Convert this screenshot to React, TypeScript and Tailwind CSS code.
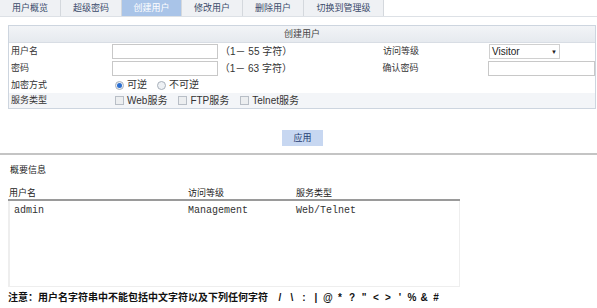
import React from "react";

const tabs = [
  { label: "用户概览", w: "w-[61px]" },
  { label: "超级密码", w: "w-[61px]" },
  { label: "创建用户", w: "w-[60px]", active: true },
  { label: "修改用户", w: "w-[61px]" },
  { label: "删除用户", w: "w-[61px]" },
  { label: "切换到管理级", w: "w-[80px]" },
];

const users = [{ name: "admin", level: "Management", service: "Web/Telnet" }];

const badChars = ["/", "\\", ":", "|", "@", "*", "?", '"', "<", ">", "'", "%", "&", "#"];

function TextBox({ w = "w-[106px]" }: { w?: string }) {
  return <div className={`${w} h-[15px] bg-white border border-[#c8c8c8]`} />;
}

function Radio({ checked }: { checked?: boolean }) {
  return (
    <span className="w-[9px] h-[9px] rounded-full border border-[#a8b0ba] bg-[#eef1f4] flex items-center justify-center">
      {checked && <span className="w-[5px] h-[5px] rounded-full bg-[#2c6fd1]" />}
    </span>
  );
}

function Check() {
  return <span className="w-[9px] h-[9px] border border-[#b8bec6] bg-[#eceef0]" />;
}

export default function App() {
  return (
    <div className="w-[597px] h-[308px] bg-white text-[#333] text-[9px] leading-none font-['Liberation_Sans','Noto_Sans_CJK_SC',sans-serif] overflow-hidden">
      {/* Tabs */}
      <div className="flex h-[17px] border-b border-[#dde1e6]">
        {tabs.map((t) => (
          <div
            key={t.label}
            className={`${t.w} flex items-center justify-center border-r border-[#d4d8dd] ${
              t.active ? "bg-[#a9c4e8] text-white" : "bg-[#eff1f4] text-[#3a4a6a]"
            }`}
          >
            {t.label}
          </div>
        ))}
        <div className="flex-1" />
      </div>

      {/* Create user panel */}
      <div className="mt-[8px] ml-[8px] w-[588px] border border-[#cdd5df]">
        <div className="h-[17px] bg-gradient-to-b from-[#f2f4f7] to-[#e6eaef] border-b border-[#d8dde4] flex items-center justify-center text-[#444]">
          创建用户
        </div>

        <div className="h-[17px] flex items-center">
          <div className="w-[103px] pl-[2px]">用户名</div>
          <TextBox />
          <div className="w-[165px] pl-[2px] text-[10px]">（1－ 55 字符）</div>
          <div className="w-[106px]">访问等级</div>
          <div className="w-[71px] h-[15px] bg-white border border-[#d0d0d0] flex items-center justify-between px-[2px] text-[10px] text-[#222]">
            <span>Visitor</span>
            <span className="text-[6px]">▼</span>
          </div>
        </div>

        <div className="h-[17px] flex items-center">
          <div className="w-[103px] pl-[2px]">密码</div>
          <TextBox />
          <div className="w-[165px] pl-[2px] text-[10px]">（1－ 63 字符）</div>
          <div className="w-[106px]">确认密码</div>
          <TextBox w="w-[107px]" />
        </div>

        <div className="h-[16px] flex items-center">
          <div className="w-[106px] pl-[2px]">加密方式</div>
          <div className="flex items-center gap-[3px] text-[10px]">
            <Radio checked />
            <span className="mr-[7px]">可逆</span>
            <Radio />
            <span>不可逆</span>
          </div>
        </div>

        <div className="h-[15px] flex items-center bg-[#f3f5f8]">
          <div className="w-[106px] pl-[2px]">服务类型</div>
          <div className="flex items-center gap-[3px] text-[10px]">
            <Check />
            <span className="mr-[8px]">Web服务</span>
            <Check />
            <span className="mr-[8px]">FTP服务</span>
            <Check />
            <span>Telnet服务</span>
          </div>
        </div>
      </div>

      {/* Apply */}
      <div className="flex justify-center mt-[21px] pl-[8px]">
        <div className="w-[41px] h-[16px] bg-[#c7d7f1] text-[#1f3d72] flex items-center justify-center">
          应用
        </div>
      </div>

      <div className="mt-[7px] border-t-2 border-[#c4c4c4]" />

      {/* Summary */}
      <div className="mt-[11px] ml-[10px] text-[#222]">概要信息</div>

      <div className="mt-[16px] ml-[8px] w-[452px]">
        <div className="flex h-[10px] items-end pb-[1px] border-b-2 border-[#9a9a9a] text-[#222]">
          <div className="w-[180px] pl-[1px]">用户名</div>
          <div className="w-[108px]">访问等级</div>
          <div>服务类型</div>
        </div>
        <div className="h-[86px] border-l-2 border-[#9a9a9a] border-r border-b border-[#eeeeee] pt-[5px] font-['Liberation_Mono',monospace] text-[10px] text-[#333]">
          {users.map((u) => (
            <div key={u.name} className="flex">
              <div className="w-[178px] pl-[4px]">{u.name}</div>
              <div className="w-[108px]">{u.level}</div>
              <div>{u.service}</div>
            </div>
          ))}
        </div>
      </div>

      <div className="mt-[6px] ml-[8px] flex items-center font-bold text-[10px] text-[#111] whitespace-nowrap">
        <span className="w-[266px]">注意：用户名字符串中不能包括中文字符以及下列任何字符</span>
        {badChars.map((c) => (
          <span key={c} className="w-[12px] text-center">
            {c}
          </span>
        ))}
      </div>
    </div>
  );
}
